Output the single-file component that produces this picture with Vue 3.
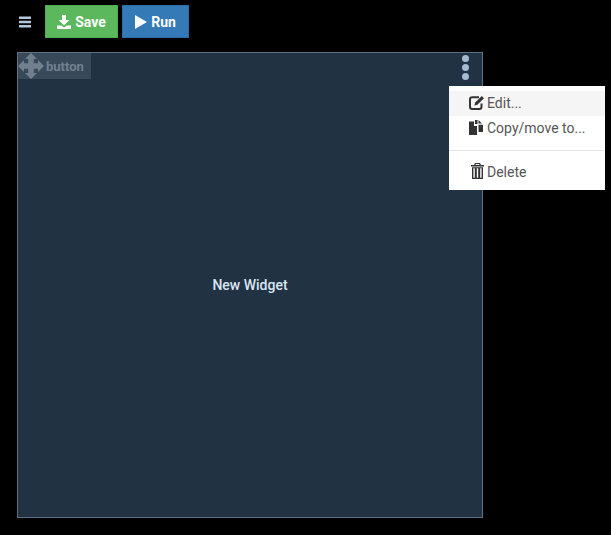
<script setup>
const items = [
  { id: 'edit', label: 'Edit...', active: true },
  { id: 'copy', label: 'Copy/move to...' }
]
</script>

<template>
  <div class="page">
    <header class="toolbar">
      <button class="menu-btn" aria-label="Menu">
        <svg width="12" height="12" viewBox="0 0 12 12"><path d="M0 0.500h12v2.400H0zM0 4.800h12v2.400H0zM0 9.100h12v2.400H0z" fill="#b4c7d9"/></svg>
      </button>
      <button class="btn save">
        <svg width="14" height="14" viewBox="0 0 14 14"><path d="M5 0h4v5h3.400L7 10.200 1.600 5H5zM0 10.400h4.200L7 12.600l2.800-2.200H14V14H0z" fill="#fff"/></svg>
        Save
      </button>
      <button class="btn run">
        <svg width="12" height="14" viewBox="0 0 12 14"><path d="M0 0v14L12 7z" fill="#fff"/></svg>
        Run
      </button>
    </header>

    <main class="widget">
      <div class="handle">
        <svg width="26" height="26" viewBox="0 0 26 26"><path d="M13 0l6 6h-3.200v4.200H20V7l6 6-6 6v-3.200h-4.200V20H19l-6 6-6-6h3.200v-4.200H6V19l-6-6 6-6v3.200h4.200V6H7z" fill="#71808f"/></svg>
        <span>button</span>
      </div>
      <div class="dots"><i></i><i></i><i></i></div>
      <span class="title">New Widget</span>

      <ul class="menu">
        <li v-for="item in items" :key="item.id" class="row" :class="{ active: item.active }">
          <svg v-if="item.id === 'edit'" class="ico" width="15" height="15" viewBox="0 0 15 15"><path d="M10 2.200H3.200C1.800 2.200 1 3 1 4.300v7.500c0 1.300.8 2.200 2.200 2.200h7.200c1.300 0 2.100-.9 2.100-2.200V8.400" fill="none" stroke="#333" stroke-width="2"/><path d="M12.800 1L15 3.200 8.400 9.800l-3 .8.800-3z" fill="#333"/></svg>
          <svg v-else class="ico" width="15" height="15" viewBox="0 0 15 15"><path d="M0 1.500h5V6h3v9H0zM6 0h2.500v4H6zM9.500 0L13 3.500H9.500zM9.500 4.800H14V12H9.500z" fill="#333"/></svg>
          <span class="label">{{ item.label }}</span>
        </li>
        <li class="divider"></li>
        <li class="row">
          <svg class="ico trash" width="13" height="16" viewBox="0 0 13 16"><path d="M4 0h5l1 2h3v1.400H0V2h3zM4.800 1 4.400 2h4.200l-.4-1zM1 4.200h11V16H1zM2.400 5.200v9.600h1.400V5.200zM5.800 5.200v9.600h1.400V5.200zM9.200 5.200v9.600h1.400V5.200z" fill="#333" fill-rule="evenodd"/></svg>
          <span class="label">Delete</span>
        </li>
      </ul>
    </main>
  </div>
</template>

<style scoped>
.page {
  display: flex;
  flex-direction: column;
  width: 611px;
  height: 535px;
  padding: 5px 0 0 17px;
  box-sizing: border-box;
  background: #000;
  font-family: Roboto, "Liberation Sans", sans-serif;
  overflow: hidden;
}
.toolbar {
  display: flex;
  align-items: center;
  gap: 4px;
  height: 33px;
}
.menu-btn {
  display: flex;
  align-items: center;
  width: 24px;
  height: 33px;
  padding: 0 0 0 2px;
  background: none;
  border: 0;
}
.btn {
  display: flex;
  align-items: center;
  justify-content: center;
  gap: 4px;
  height: 33px;
  box-sizing: border-box;
  border: 1px solid;
  padding: 0;
  color: #fff;
  font: 700 14px Roboto, "Liberation Sans", sans-serif;
}
.save {
  width: 73px;
  background: #5cb85c;
  border-color: #4cae4c;
}
.run {
  width: 67px;
  background: #337ab7;
  border-color: #2e6da4;
}
.widget {
  position: relative;
  display: flex;
  align-items: center;
  justify-content: center;
  width: 466px;
  height: 466px;
  margin-top: 14px;
  box-sizing: border-box;
  background: #213243;
  border: 1px solid #5f7184;
}
.title {
  color: #d9e6f2;
  font-size: 14px;
  font-weight: 500;
}
.handle {
  position: absolute;
  top: 0;
  left: 0;
  display: flex;
  align-items: center;
  gap: 2px;
  width: 73px;
  height: 26px;
  background: #38495a;
  color: #71808f;
  font-size: 13px;
  font-weight: 700;
}
.dots {
  position: absolute;
  top: 2px;
  right: 13px;
  display: flex;
  flex-direction: column;
  gap: 2px;
}
.dots i {
  width: 7px;
  height: 7px;
  border-radius: 50%;
  background: #a3bbd1;
}
.menu {
  position: absolute;
  top: 33px;
  left: 431px;
  width: 156px;
  height: 104px;
  margin: 0;
  padding: 5px 0;
  box-sizing: border-box;
  list-style: none;
  background: #fff;
  color: #555;
  font-size: 14px;
  z-index: 2;
}
.row {
  display: flex;
  align-items: center;
  gap: 3px;
  height: 25px;
  padding-left: 20px;
}
.row.active {
  background: #f5f5f5;
}
.label {
  padding-bottom: 2px;
}
.ico {
  flex: none;
  margin-bottom: 2px;
}
.trash {
  margin-left: 2px;
  margin-bottom: 3px;
}
.divider {
  height: 1px;
  margin: 9px 0;
  background: #e5e5e5;
}
</style>
